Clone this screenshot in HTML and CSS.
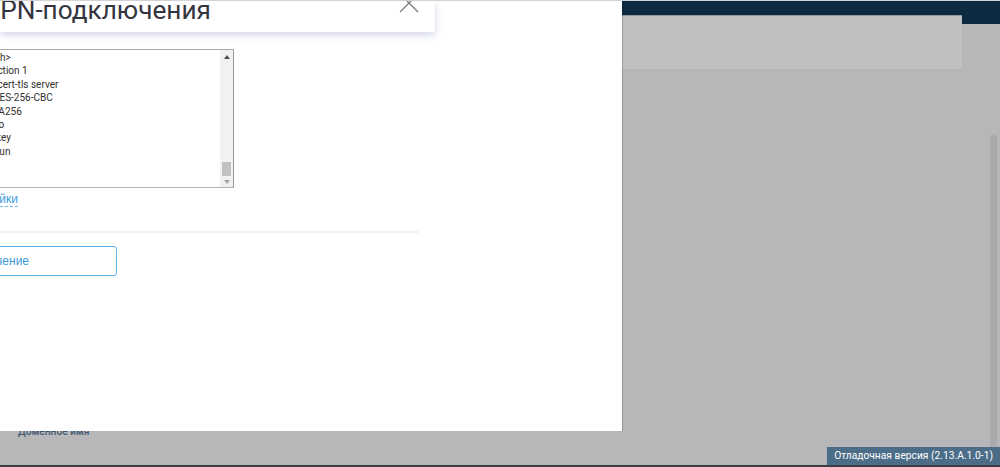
FILE: index.html
```html
<!DOCTYPE html>
<html lang="ru">
<head>
    <meta charset="UTF-8">
    <meta name="viewport" content="width=device-width, initial-scale=1.0">
    <title>VPN-подключения</title>
    <link rel="stylesheet" href="styles.css">
</head>
<body>
    <div class="screen">
        <!-- page behind the modal -->
        <div class="page">
            <div class="page-header"></div>
            <div class="page-row">
                <div class="page-main">
                    <div class="page-panel"></div>
                    <div class="field-label">Доменное имя</div>
                </div>
                <div class="page-scroll"></div>
            </div>
            <div class="page-footer"></div>
        </div>

        <!-- modal -->
        <div class="dialog">
            <div class="dialog-head">
                <h1 class="dialog-title">VPN-подключения</h1>
                <svg class="dialog-close" width="20" height="20" viewBox="0 0 20 20">
                    <path d="M1 1L19 19M19 1L1 19" stroke="#7a7a80" stroke-width="1.3" fill="none"/>
                </svg>
            </div>
            <div class="dialog-body">
                <div class="config-box">
                    <div class="config-lines">
                        <div>&lt;/tls-auth&gt;</div>
                        <div>key-direction 1</div>
                        <div>remote-cert-tls server</div>
                        <div>cipher AES-256-CBC</div>
                        <div>auth SHA256</div>
                        <div>comp-lzo</div>
                        <div>persist-key</div>
                        <div>persist-tun</div>
                    </div>
                    <div class="fake-scroll">
                        <span class="arrow-up"></span>
                        <span class="thumb"></span>
                        <span class="arrow-down"></span>
                    </div>
                </div>
                <div class="more-row">
                    <a class="more-link" href="#">Дополнительные настройки</a>
                </div>
                <div class="divider"></div>
                <div class="actions">
                    <button class="btn-outline">Подключение</button>
                </div>
            </div>
        </div>

        <div class="debug-badge">Отладочная версия (2.13.A.1.0-1)</div>
    </div>
</body>
</html>
```

FILE: styles.css
```css
* {
    box-sizing: border-box;
}
body {
    margin: 0;
    font-family: "Liberation Sans", Arial, sans-serif;
    overflow: hidden;
}
.screen {
    position: relative;
    width: 1000px;
    height: 467px;
    overflow: hidden;
    border-top: 1px solid #d3d3d5;
    background-color: #b7b7b9;
}

/* background page */
.page {
    display: flex;
    flex-direction: column;
    height: 466px;
}
.page-header {
    height: 23px;
    background-color: #0c2a40;
}
.page-row {
    display: flex;
    flex: 1;
    margin-top: -9px;
}
.page-main {
    width: 962px;
}
.page-panel {
    height: 54px;
    background-color: #c0c0c2;
    border-top: 1px solid #8f989f;
}
.field-label {
    margin-top: 356px;
    padding-left: 18px;
    font-family: Roboto, sans-serif;
    font-size: 10.25px;
    font-weight: 500;
    color: #3f5770;
}
.page-scroll {
    width: 7px;
    margin: 120px 0 5px 28px;
    border-radius: 3px;
    background-color: #aaaaac;
}
.page-footer {
    height: 2px;
    background-color: #3b3e42;
}

/* modal */
.dialog {
    position: absolute;
    top: 0;
    left: 0;
    width: 622px;
    height: 430px;
    overflow: hidden;
    background-color: #fff;
    box-shadow: 1px 0 0 rgba(0,0,0,0.18);
}
.dialog-head {
    position: relative;
    z-index: 1;
    display: flex;
    justify-content: space-between;
    align-items: flex-start;
    width: 435px;
    height: 31px;
    background-color: #fff;
    box-shadow: 0 3px 7px rgba(80,90,170,0.25);
}
.dialog-title {
    margin: -6px 0 0 -16.5px;
    font-family: Roboto, sans-serif;
    font-size: 26.2px;
    font-weight: 400;
    color: #34343e;
    white-space: nowrap;
}
.dialog-close {
    margin: -8px 16px 0 0;
}
.dialog-body {
    margin-left: -46px;
    padding-top: 17px;
}
.config-box {
    display: flex;
    width: 280px;
    height: 139px;
    border: 1px solid #a9a9a9;
    border-right-color: #999;
    border-bottom-color: #b3b3b3;
}
.config-lines {
    flex: 1;
    padding: 1px 0 0 8px;
    font-family: Roboto, sans-serif;
    font-size: 10px;
    line-height: 13.4px;
    color: #2f2f2f;
    white-space: nowrap;
    overflow: hidden;
}
.fake-scroll {
    display: flex;
    flex-direction: column;
    align-items: center;
    width: 13px;
    padding: 5px 0 3px;
    background-color: #f1f1f1;
}
.arrow-up {
    width: 0;
    height: 0;
    border-left: 3px solid transparent;
    border-right: 3px solid transparent;
    border-bottom: 4px solid #505050;
}
.thumb {
    width: 9px;
    height: 14px;
    margin-top: auto;
    background-color: #c1c1c1;
}
.arrow-down {
    width: 0;
    height: 0;
    margin-top: 4px;
    border-left: 3px solid transparent;
    border-right: 3px solid transparent;
    border-top: 4px solid #a3a3a3;
}
.more-row {
    display: flex;
    justify-content: flex-end;
    width: 64px;
    margin-top: 4px;
}
.more-link {
    font-size: 12px;
    line-height: 14px;
    color: #3e9be0;
    text-decoration: none;
    white-space: nowrap;
    border-bottom: 1px dashed #6db3e8;
}
.divider {
    width: 465px;
    height: 2px;
    margin-top: 24px;
    background-color: #ebf3fa;
}
.actions {
    display: flex;
    justify-content: flex-end;
    width: 163px;
    margin-top: 13px;
}
.btn-outline {
    flex-shrink: 0;
    width: 252px;
    height: 30px;
    border: 1px solid #64b1e8;
    border-radius: 3px;
    background-color: #fff;
    font-family: "Liberation Sans", Arial, sans-serif;
    font-size: 12px;
    color: #3c98d8;
}

.debug-badge {
    position: absolute;
    right: 0;
    bottom: 2px;
    height: 18px;
    padding: 0 7px;
    background-color: #4c6d88;
    font-family: Roboto, sans-serif;
    font-size: 10.25px;
    line-height: 18px;
    color: #fff;
    white-space: nowrap;
}
```
